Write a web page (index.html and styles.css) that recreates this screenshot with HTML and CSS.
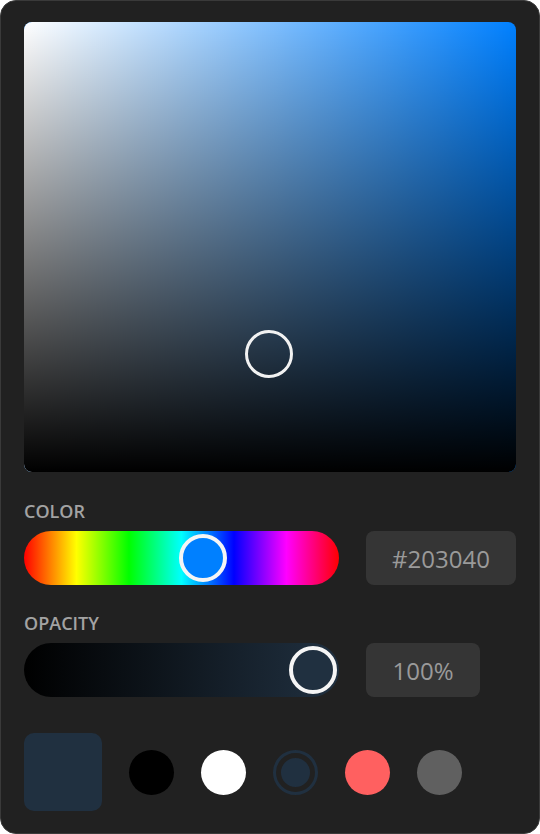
FILE: index.html
```html
<!DOCTYPE html>
<html lang="en">
<head>
<meta charset="utf-8">
<title>Color Picker</title>
<link rel="stylesheet" href="styles.css">
</head>
<body>
<div class="card">
  <div class="sat">
    <div class="sat-white"></div>
    <div class="sat-black"></div>
    <div class="sat-handle" style="left:221px;top:308px"></div>
  </div>

  <div class="label label-color">COLOR</div>
  <div class="row">
    <div class="bar hue">
      <div class="knob knob-hue" style="left:155px"></div>
    </div>
    <div class="field field-hex">#203040</div>
  </div>

  <div class="label label-opacity">OPACITY</div>
  <div class="row">
    <div class="bar alpha">
      <div class="knob knob-alpha" style="left:265px"></div>
    </div>
    <div class="field field-pct">100%</div>
  </div>

  <div class="swatches">
    <div class="preview"></div>
    <div class="dot dot-black"></div>
    <div class="dot dot-white"></div>
    <div class="dot dot-current"></div>
    <div class="dot dot-red"></div>
    <div class="dot dot-gray"></div>
  </div>
</div>
</body>
</html>
```

FILE: styles.css
```css
html, body {
  margin: 0;
  padding: 0;
  background: #ffffff;
}

body {
  font-family: "Open Sans", "Noto Sans", sans-serif;
}

.card {
  box-sizing: border-box;
  width: 540px;
  height: 834px;
  background: #212121;
  border: 1px solid #3a3a3a;
  border-radius: 16px;
  padding: 21px 23px 0 23px;
  display: flex;
  flex-direction: column;
}

.sat {
  position: relative;
  height: 450px;
  border-radius: 8px;
  overflow: hidden;
  background: #0080ff;
}

.sat-white,
.sat-black {
  position: absolute;
  inset: 0;
}

.sat-white {
  background: linear-gradient(to right, #ffffff, rgba(255, 255, 255, 0));
}

.sat-black {
  background: linear-gradient(to bottom, rgba(0, 0, 0, 0), #000000);
}

.sat-handle {
  position: absolute;
  box-sizing: border-box;
  width: 48px;
  height: 48px;
  border-radius: 50%;
  border: 3px solid #f2f2f2;
}

.label {
  color: #a3a3a3;
  font-size: 18px;
  font-weight: 600;
  line-height: 22px;
  margin-bottom: 9px;
}

.label-color {
  margin-top: 28px;
}

.label-opacity {
  margin-top: 27px;
}

.row {
  display: flex;
  gap: 27px;
  height: 54px;
}

.bar {
  position: relative;
  width: 315px;
  height: 54px;
  border-radius: 27px;
}

.hue {
  background: linear-gradient(to right,
    #ff0000 0%, #ffff00 16.67%, #00ff00 33.33%, #00ffff 50%,
    #0000ff 66.67%, #ff00ff 83.33%, #ff0000 100%);
}

.alpha {
  background: linear-gradient(to right, #000000 0%, #203040 100%);
}

.knob {
  position: absolute;
  top: 3px;
  box-sizing: border-box;
  width: 48px;
  height: 48px;
  border-radius: 50%;
  border: 4px solid #f5f5f5;
}

.knob-hue {
  background: #0080ff;
}

.knob-alpha {
  background: #203040;
}

.field {
  display: flex;
  align-items: center;
  justify-content: center;
  height: 54px;
  border-radius: 8px;
  background: #353535;
  color: #9a9a9a;
  font-size: 24px;
}

.field-hex {
  width: 150px;
}

.field-pct {
  width: 114px;
}

.swatches {
  display: flex;
  align-items: center;
  gap: 27px;
  margin-top: 36px;
}

.preview {
  width: 78px;
  height: 78px;
  border-radius: 10px;
  background: #203040;
}

.dot {
  box-sizing: border-box;
  width: 45px;
  height: 45px;
  border-radius: 50%;
}

.dot-black { background: #000000; }
.dot-white { background: #ffffff; }
.dot-red { background: #ff6060; }
.dot-gray { background: #606060; }

.dot-current {
  border: 3px solid #203040;
  padding: 5px;
  background: #203040;
  background-clip: content-box;
}
```
